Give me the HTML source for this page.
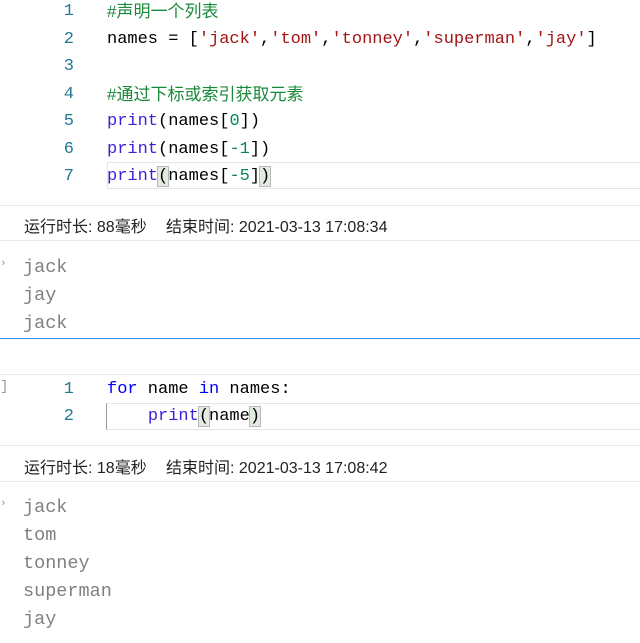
<!DOCTYPE html><html><head><style>
body{margin:0;width:640px;height:643px;background:#fff;position:relative;overflow:hidden;font-family:"Liberation Mono",monospace;}
.a{position:absolute;white-space:pre;}
.c{font-size:17px;line-height:27.5px;height:27.5px;}
.ln{color:#237893;width:74px;text-align:right;left:0;}
.k{color:#0000ff}.p{color:#3c1fd9}.s{color:#a31515}.n{color:#098658}.cm{color:#1a8a3a;font-family:"Liberation Sans","Noto Sans CJK SC",sans-serif}
.o{color:#808080;font-family:"Liberation Mono",monospace;font-size:18.5px;left:23px;line-height:28px}
.st{font-family:"Liberation Sans","Noto Sans CJK SC",sans-serif;font-size:16px;color:#222}
.hr{position:absolute;left:0;width:640px;height:1px;background:#e8e8ee}
.br{background:#e3eadf;outline:1px solid #b9b9b9}
</style></head><body>
<div class="a c ln" style="top:-2px">1</div><div class="a c cm" style="left:107px;top:-2px">#声明一个列表</div>
<div class="a c ln" style="top:25.5px">2</div><div class="a c" style="left:107px;top:25.5px">names = [<span class="s">'jack'</span>,<span class="s">'tom'</span>,<span class="s">'tonney'</span>,<span class="s">'superman'</span>,<span class="s">'jay'</span>]</div>
<div class="a c ln" style="top:53px">3</div>
<div class="a c ln" style="top:80.5px">4</div><div class="a c cm" style="left:107px;top:80.5px">#通过下标或索引获取元素</div>
<div class="a c ln" style="top:108px">5</div><div class="a c" style="left:107px;top:108px"><span class="p">print</span>(names[<span class="n">0</span>])</div>
<div class="a c ln" style="top:135.5px">6</div><div class="a c" style="left:107px;top:135.5px"><span class="p">print</span>(names[<span class="n">-1</span>])</div>
<div class="a" style="left:107px;top:162px;width:533px;height:25px;border:1px solid #e6e6e6;border-right:0"></div>
<div class="a c ln" style="top:162.5px">7</div><div class="a c" style="left:107px;top:162.5px"><span class="p">print</span><span class="br">(</span>names[<span class="n">-5</span>]<span class="br">)</span></div>
<div class="hr" style="top:205px"></div>
<div class="a st" style="top:213px;left:24px">运行时长: 88毫秒</div>
<div class="a st" style="top:213px;left:166px">结束时间: 2021-03-13 17:08:34</div>
<div class="hr" style="top:240px"></div>
<div class="a" style="left:0;top:258px;color:#999;font-size:11px">›</div>
<div class="a o" style="top:254px">jack
jay
jack</div>
<div class="a" style="left:0;top:338px;width:640px;height:1px;background:#3d8ee6"></div>
<div class="hr" style="top:374px"></div>
<div class="a" style="left:0;top:379px;color:#999;font-size:14px">]</div>
<div class="a c ln" style="top:375.5px">1</div><div class="a c" style="left:107px;top:375.5px"><span class="k">for</span> name <span class="k">in</span> names:</div>
<div class="a" style="left:106px;top:403px;width:534px;height:25px;border:1px solid #e6e6e6;border-left:1px solid #999;border-right:0"></div>
<div class="a c ln" style="top:403px">2</div><div class="a c" style="left:107px;top:403px">    <span class="p">print</span><span class="br">(</span>name<span class="br">)</span></div>
<div class="hr" style="top:445px"></div>
<div class="a st" style="top:454px;left:24px">运行时长: 18毫秒</div>
<div class="a st" style="top:454px;left:166px">结束时间: 2021-03-13 17:08:42</div>
<div class="hr" style="top:481px"></div>
<div class="a" style="left:0;top:498px;color:#999;font-size:11px">›</div>
<div class="a o" style="top:494px">jack
tom
tonney
superman
jay</div>
</body></html>
